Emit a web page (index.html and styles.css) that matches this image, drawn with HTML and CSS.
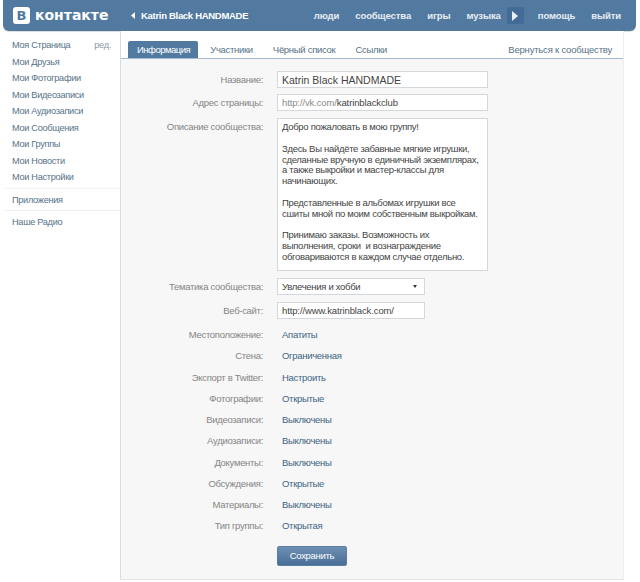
FILE: index.html
```html
<!DOCTYPE html>
<html lang="en">
<head>
    <meta charset="UTF-8">
    <meta name="viewport" content="width=device-width, initial-scale=1.0">
    <title>ВКонтакте</title>
    <link rel="stylesheet" href="styles.css">
</head>
<body>
    <header class="topbar">
        <div class="logo"><span class="logo-mark">В</span><span class="logo-text">контакте</span></div>
        <div class="crumb">
            <svg class="crumb-arrow" width="4" height="7" viewBox="0 0 4 7"><path d="M4 0v7L0 3.5z" fill="#fff"/></svg>
            Katrin Black HANDMADE
        </div>
        <nav class="topnav">
            <a>люди</a>
            <a>сообщества</a>
            <a>игры</a>
            <a>музыка</a>
            <span class="play"><svg width="6" height="10" viewBox="0 0 6 10"><path d="M0 0l6 5-6 5z" fill="#e6edf3"/></svg></span>
            <a>помощь</a>
            <a>выйти</a>
        </nav>
    </header>

    <div class="page">
        <aside class="sidebar">
            <div class="side-group">
                <div class="side-row"><a>Моя Страница</a><a class="side-edit">ред.</a></div>
                <a>Мои Друзья</a>
                <a>Мои Фотографии</a>
                <a>Мои Видеозаписи</a>
                <a>Мои Аудиозаписи</a>
                <a>Мои Сообщения</a>
                <a>Мои Группы</a>
                <a>Мои Новости</a>
                <a>Мои Настройки</a>
            </div>
            <div class="side-group"><a>Приложения</a></div>
            <div class="side-group"><a>Наше Радио</a></div>
        </aside>

        <main class="content">
            <div class="tabs">
                <a class="tab active">Информация</a>
                <a class="tab">Участники</a>
                <a class="tab">Чёрный список</a>
                <a class="tab">Ссылки</a>
                <a class="back-link">Вернуться к сообществу</a>
            </div>

            <form class="form">
                <div class="row row-field">
                    <label>Название:</label>
                    <input class="field latin-name" type="text" value="Katrin Black HANDMADE">
                </div>
                <div class="row row-field">
                    <label>Адрес страницы:</label>
                    <div class="field latin"><span class="muted">http://vk.com/</span>katrinblackclub</div>
                </div>
                <div class="row row-text">
                    <label>Описание сообщества:</label>
                    <textarea class="field area">Добро пожаловать в мою группу!

Здесь Вы найдёте забавные мягкие игрушки,
сделанные вручную в единичный экземплярах,
а также выкройки и мастер-классы для
начинающих.

Представленные в альбомах игрушки все
сшиты мной по моим собственным выкройкам.

Принимаю заказы. Возможность их
выполнения, сроки  и вознаграждение
обговариваются в каждом случае отдельно.</textarea>
                </div>
                <div class="row row-field">
                    <label>Тематика сообщества:</label>
                    <div class="field short select">Увлечения и хобби<span class="caret"></span></div>
                </div>
                <div class="row row-field row-last">
                    <label>Веб-сайт:</label>
                    <input class="field short latin" type="text" value="http://www.katrinblack.com/">
                </div>
                <div class="row row-info"><label>Местоположение:</label><a>Апатиты</a></div>
                <div class="row row-info"><label>Стена:</label><a>Ограниченная</a></div>
                <div class="row row-info"><label>Экспорт в Twitter:</label><a>Настроить</a></div>
                <div class="row row-info"><label>Фотографии:</label><a>Открытые</a></div>
                <div class="row row-info"><label>Видеозаписи:</label><a>Выключены</a></div>
                <div class="row row-info"><label>Аудиозаписи:</label><a>Выключены</a></div>
                <div class="row row-info"><label>Документы:</label><a>Выключены</a></div>
                <div class="row row-info"><label>Обсуждения:</label><a>Открытые</a></div>
                <div class="row row-info"><label>Материалы:</label><a>Выключены</a></div>
                <div class="row row-info"><label>Тип группы:</label><a>Открытая</a></div>
                <div class="row row-submit">
                    <span></span>
                    <button type="button" class="save">Сохранить</button>
                </div>
            </form>
        </main>
    </div>
</body>
</html>
```

FILE: styles.css
```css
body {
    font-family: "Liberation Sans", Arial, sans-serif;
    font-size: 9.5px;
    letter-spacing: -0.3px;
    margin: 0;
    padding: 0 0 0 3px;
    width: 633px;
    height: 582px;
    overflow: hidden;
    background-color: #fff;
    color: #3d6484;
}

.topbar {
    display: flex;
    align-items: center;
    height: 31px;
    background: #527aa0;
    border-radius: 0 0 6px 6px;
    color: #fff;
    font-weight: bold;
    box-shadow: 0 1px 1px rgba(0, 0, 0, 0.15);
}

.logo {
    display: flex;
    align-items: center;
    width: 123px;
    padding-left: 10px;
    box-sizing: border-box;
    letter-spacing: 0;
}

.logo-mark {
    width: 17px;
    height: 17px;
    margin-right: 5px;
    background: #fff;
    border-radius: 3px;
    color: #527aa0;
    font: bold 13px/17px "DejaVu Sans", sans-serif;
    text-align: center;
}

.logo-text {
    font: bold 14px/17px "DejaVu Sans", sans-serif;
}

.crumb {
    display: flex;
    align-items: center;
    gap: 6px;
    margin-left: 5px;
    white-space: nowrap;
}

.topnav {
    display: flex;
    align-items: center;
    gap: 16px;
    margin-left: auto;
    margin-right: 15px;
    color: #e6edf3;
    letter-spacing: -0.1px;
}

.play {
    display: flex;
    align-items: center;
    justify-content: center;
    width: 17px;
    height: 17px;
    margin: 0 -2px 0 -10px;
    background: #426c96;
    border-radius: 2px;
}

.page {
    display: flex;
    height: 551px;
}

.sidebar {
    display: flex;
    flex-direction: column;
    width: 117px;
    padding: 6px 0 0 2px;
    box-sizing: border-box;
    font-size: 9.2px;
    color: #567389;
}

.side-group {
    display: flex;
    flex-direction: column;
    padding-bottom: 2px;
    border-bottom: 1px solid #eef0f2;
    margin-bottom: 3px;
}

.side-group:last-child {
    border-bottom: none;
}

.side-group a {
    height: 16.5px;
    line-height: 16.5px;
    padding-left: 7px;
}

.side-row {
    display: flex;
    justify-content: space-between;
}

.side-edit {
    color: #8a9aa8;
    padding-right: 9px;
}

.content {
    width: 502px;
    background: #f7f7f7;
    border-left: 1px solid #d9dcdf;
    border-right: 1px solid #eceef0;
    border-bottom: 1px solid #e3e5e7;
    margin-bottom: 2px;
}

.tabs {
    display: flex;
    align-items: flex-end;
    height: 27px;
    padding-left: 7px;
    background: #fff;
    border-bottom: 1px solid #a6bbcf;
    color: #567389;
}

.tab {
    height: 17px;
    line-height: 17px;
    padding: 0 8px;
    margin-right: 4px;
}

.tab.active {
    padding: 0 8px 0 9px;
    background: #527aa0;
    border-radius: 2px 2px 0 0;
    color: #fff;
    letter-spacing: -0.5px;
}

.back-link {
    margin-left: auto;
    margin-right: 11px;
    line-height: 17px;
    letter-spacing: -0.2px;
}

.form {
    display: flex;
    flex-direction: column;
    padding-top: 12px;
}

.row {
    display: grid;
    grid-template-columns: 142px 211px;
    column-gap: 14px;
    align-items: center;
}

.row label {
    text-align: right;
    color: #858585;
}

.row-field {
    margin-bottom: 7px;
}

.row-field:first-child {
    margin-bottom: 6px;
}

.row-last {
    margin-bottom: 5px;
}

.row-text {
    align-items: start;
    margin-bottom: 7px;
}

.row-text label {
    padding-top: 3px;
}

.row-info {
    height: 21.25px;
}

.row-info a {
    padding-left: 5px;
}

.row-submit {
    margin-top: 9px;
}

.field {
    box-sizing: border-box;
    width: 211px;
    height: 17px;
    padding: 0 4px;
    margin: 0;
    background: #fff;
    border: 1px solid #d3d8dc;
    font: inherit;
    letter-spacing: inherit;
    line-height: 15px;
    color: #444;
    outline: none;
}

.latin {
    letter-spacing: -0.12px;
}

.latin-name {
    font-size: 10.5px;
    letter-spacing: 0;
}

.short {
    width: 148px;
}

.muted {
    color: #8a8a8a;
}

.area {
    display: block;
    height: 153px;
    padding: 3px 4px;
    line-height: 10.85px;
    overflow: hidden;
    resize: none;
}

.select {
    display: flex;
    align-items: center;
    justify-content: space-between;
}

.caret {
    width: 0;
    height: 0;
    margin-right: 3px;
    border-left: 2.5px solid transparent;
    border-right: 2.5px solid transparent;
    border-top: 3px solid #333;
}

.save {
    width: 70px;
    height: 20px;
    padding: 0;
    background: linear-gradient(#6d8fb3, #4a6e96);
    border: 1px solid #5a7ea3;
    border-radius: 2px;
    color: #fff;
    font: inherit;
    letter-spacing: inherit;
    cursor: pointer;
}
```
